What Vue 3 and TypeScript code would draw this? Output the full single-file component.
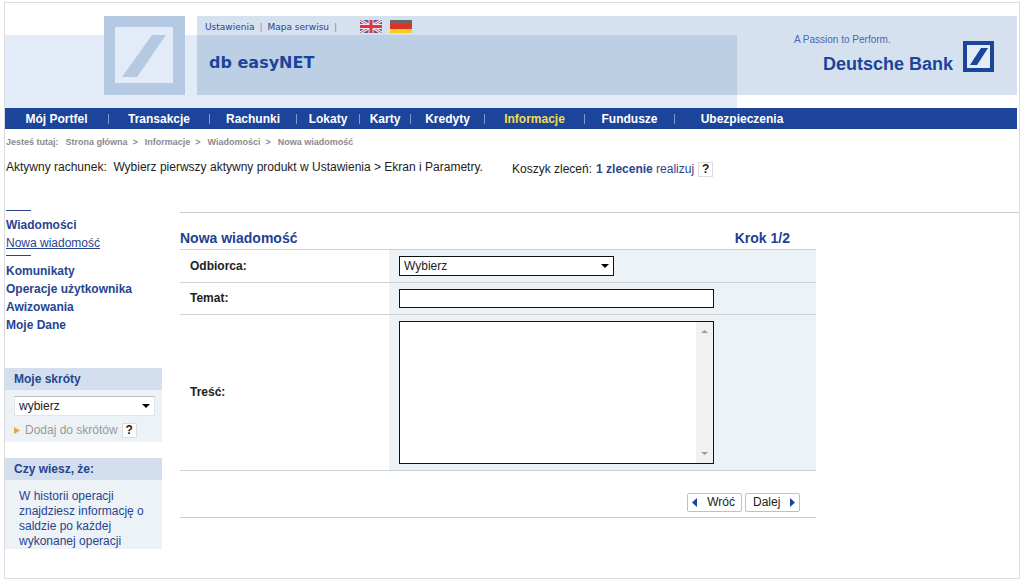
<script setup lang="ts">
import { ref } from 'vue'

interface NavItem {
  label: string
  active?: boolean
}

const navItems: NavItem[] = [
  { label: 'Mój Portfel' },
  { label: 'Transakcje' },
  { label: 'Rachunki' },
  { label: 'Lokaty' },
  { label: 'Karty' },
  { label: 'Kredyty' },
  { label: 'Informacje', active: true },
  { label: 'Fundusze' },
  { label: 'Ubezpieczenia' },
]

const crumbs: string[] = ['Strona główna', 'Informacje', 'Wiadomości', 'Nowa wiadomość']
const sections: string[] = ['Komunikaty', 'Operacje użytkownika', 'Awizowania', 'Moje Dane']

const recipient = ref('Wybierz')
const subject = ref('')
const body = ref('')
const shortcut = ref('wybierz')
</script>

<template>
  <div class="frame">
    <header class="header">
      <div class="band"></div>
      <div class="panel"></div>
      <div class="panel-dark"></div>
      <div class="emblem">
        <svg width="81" height="79" viewBox="0 0 81 79" aria-hidden="true">
          <rect width="81" height="79" fill="#b5c9e2" />
          <rect x="11" y="11" width="58" height="56" fill="#e2ebf7" />
          <path d="M48 19H62L33 61H18Z" fill="#b5c9e2" />
        </svg>
      </div>
      <div class="tools">
        <a href="#">Ustawienia</a><span class="bar">|</span>
        <a href="#">Mapa serwisu</a><span class="bar">|</span>
        <a href="#" class="flag flag-en" aria-label="English">
          <svg width="22" height="13" viewBox="0 0 22 13">
            <rect width="22" height="13" fill="#5a5f9c" />
            <path d="M0 0L22 13M22 0L0 13" stroke="#f1eef5" stroke-width="3" />
            <path d="M0 0L22 13M22 0L0 13" stroke="#d9566a" stroke-width="1" />
            <path d="M11 0V13M0 6.5H22" stroke="#f3e4ea" stroke-width="5" />
            <path d="M11 0V13M0 6.5H22" stroke="#dc3545" stroke-width="3" />
          </svg>
        </a>
        <a href="#" class="flag" aria-label="Deutsch">
          <svg width="22" height="13" viewBox="0 0 22 13">
            <rect width="22" height="5" fill="#6b6767" />
            <rect y="4" width="22" height="5" fill="#dd3128" />
            <rect y="9" width="22" height="4" fill="#f8cf1c" />
          </svg>
        </a>
      </div>
      <div class="product">db easyNET</div>
      <div class="brand">
        <div class="brand-text">
          <span class="claim">A Passion to Perform.</span>
          <span class="bank">Deutsche Bank</span>
        </div>
        <svg width="31" height="31" viewBox="0 0 31 31" aria-hidden="true">
          <rect x="2" y="2" width="27" height="27" fill="#e3ebf6" stroke="#1c449b" stroke-width="4" />
          <path d="M18 7H25L14 24H7Z" fill="#1c449b" />
        </svg>
      </div>
    </header>

    <nav class="nav">
      <ul>
        <li v-for="item in navItems" :key="item.label">
          <a href="#" :class="{ active: item.active }">{{ item.label }}</a>
        </li>
      </ul>
    </nav>

    <div class="crumbs">
      <span>Jesteś tutaj:</span>
      <template v-for="(crumb, i) in crumbs" :key="crumb">
        <span v-if="i > 0" class="gt">&gt;</span>
        <a href="#">{{ crumb }}</a>
      </template>
    </div>

    <div class="status">
      <p class="account">Aktywny rachunek:&nbsp; Wybierz pierwszy aktywny produkt w Ustawienia &gt; Ekran i Parametry.</p>
      <p class="basket">
        Koszyk zleceń: <a href="#"><b>1 zlecenie</b> realizuj</a>
        <button type="button" class="help">?</button>
      </p>
    </div>

    <div class="columns">
      <aside class="side">
        <ul class="menu">
          <li class="group">
            <a href="#" class="main-link">Wiadomości</a>
            <a href="#" class="sub-link">Nowa wiadomość</a>
          </li>
          <li v-for="section in sections" :key="section">
            <a href="#" class="main-link">{{ section }}</a>
          </li>
        </ul>

        <section class="box">
          <h2><label for="shortcut">Moje skróty</label></h2>
          <div class="box-body">
            <div class="select select-light">
              <select id="shortcut" v-model="shortcut">
                <option>wybierz</option>
              </select>
              <svg width="8" height="4" viewBox="0 0 8 4" aria-hidden="true"><path d="M0 0H8L4 4Z" fill="#000" /></svg>
            </div>
            <div class="add">
              <svg width="6" height="7" viewBox="0 0 6 7" aria-hidden="true"><path d="M0 0L6 3.5L0 7Z" fill="#e2a93b" /></svg>
              <a href="#">Dodaj do skrótów</a>
              <button type="button" class="help">?</button>
            </div>
          </div>
        </section>

        <section class="box">
          <h2>Czy wiesz, że:</h2>
          <p class="tip">W historii operacji znajdziesz informację o saldzie po każdej wykonanej operacji</p>
        </section>
      </aside>

      <main class="main">
        <form class="form" @submit.prevent>
          <div class="form-head">
            <h1>Nowa wiadomość</h1>
            <span class="step">Krok 1/2</span>
          </div>
          <div class="row">
            <label for="recipient">Odbiorca:</label>
            <div class="field">
              <div class="select select-dark">
                <select id="recipient" v-model="recipient">
                  <option>Wybierz</option>
                </select>
                <svg width="8" height="4" viewBox="0 0 8 4" aria-hidden="true"><path d="M0 0H8L4 4Z" fill="#000" /></svg>
              </div>
            </div>
          </div>
          <div class="row">
            <label for="subject">Temat:</label>
            <div class="field">
              <input id="subject" v-model="subject" type="text" />
            </div>
          </div>
          <div class="row">
            <label for="body">Treść:</label>
            <div class="field">
              <div class="area">
                <textarea id="body" v-model="body"></textarea>
                <div class="track" aria-hidden="true">
                  <svg width="7" height="3" viewBox="0 0 7 3"><path d="M0 3L3.5 0L7 3Z" fill="#9a9a9a" /></svg>
                  <svg width="7" height="3" viewBox="0 0 7 3"><path d="M0 0H7L3.5 3Z" fill="#9a9a9a" /></svg>
                </div>
              </div>
            </div>
          </div>
          <div class="actions">
            <button type="button">
              <svg width="5" height="9" viewBox="0 0 5 9" aria-hidden="true"><path d="M5 0V9L0 4.5Z" fill="#1c449b" /></svg>
              Wróć
            </button>
            <button type="submit">
              Dalej
              <svg width="5" height="9" viewBox="0 0 5 9" aria-hidden="true"><path d="M0 0V9L5 4.5Z" fill="#1c449b" /></svg>
            </button>
          </div>
        </form>
      </main>
    </div>
  </div>
</template>

<style>
body {
  margin: 0;
  background: #fff;
}
</style>

<style scoped>
.frame {
  box-sizing: border-box;
  margin: 2px 4px 4px;
  padding: 13px 0 29px;
  border: 1px solid #d9dbe0;
  font: 12px/15px "Liberation Sans", Arial, sans-serif;
  color: #222;
}

a {
  color: #27448f;
  text-decoration: none;
}

ul,
p,
h1,
h2 {
  margin: 0;
  padding: 0;
  list-style: none;
}

button,
input,
select,
textarea {
  box-sizing: border-box;
  margin: 0;
  font: inherit;
  color: #222;
}

svg {
  display: block;
  flex: none;
}

/* Header: overlapping bands share one grid */
.header {
  display: grid;
  grid-template-columns: 99px 81px 12px minmax(0, 540px) minmax(280px, 1fr);
  grid-template-rows: 19px 60px 13px;
  margin-right: 2px;
}

.band {
  grid-area: 2 / 1 / 4 / 5;
  background: #e2ebf7;
}

.panel {
  grid-area: 1 / 4 / 3 / 6;
  background: #d6e1ef;
}

.panel-dark {
  grid-area: 2 / 4 / 3 / 5;
  background: #bdcfe5;
}

.emblem {
  grid-area: 1 / 2 / 3 / 3;
}

.tools {
  grid-area: 1 / 4 / 2 / 5;
  display: flex;
  align-items: center;
  padding: 2px 0 0 8px;
  font: 9px/12px "DejaVu Sans", Verdana, sans-serif;
}

.tools .bar {
  margin: 0 5px;
  color: #7f8ca3;
}

.flag {
  margin-left: 8px;
}

.flag-en {
  margin-left: 18px;
}

.product {
  grid-area: 2 / 4 / 3 / 5;
  padding: 18px 0 0 12px;
  font: bold 16px/20px "DejaVu Sans", Verdana, sans-serif;
  color: #1c449b;
}

.brand {
  grid-area: 1 / 5 / 3 / 6;
  display: flex;
  justify-content: flex-end;
  align-items: flex-start;
  gap: 10px;
  padding: 25px 23px 0 0;
}

.brand-text {
  display: flex;
  flex-direction: column;
  gap: 7px;
  margin-top: -7px;
}

.claim {
  font-size: 10px;
  line-height: 12px;
  color: #4a68ad;
}

.bank {
  padding-left: 29px;
  font-size: 18px;
  line-height: 22px;
  font-weight: bold;
  color: #1c449b;
}

.nav {
  margin-right: 2px;
  background: #1c449b;
}

.nav ul {
  display: grid;
  grid-template-columns: 104fr 101fr 87fr 63fr 51fr 74fr 100fr 90fr 134fr 208fr;
  align-items: center;
  height: 21px;
}

.nav li {
  border-right: 1px solid #7f9bd0;
  text-align: center;
  font-weight: bold;
  line-height: 10px;
  white-space: nowrap;
}

.nav li:last-child {
  border-right: 0;
}

.nav a {
  color: #fff;
}

.nav a.active {
  color: #f2dc50;
}

.crumbs {
  display: flex;
  padding: 7px 1px 0;
  font-size: 9px;
  line-height: 12px;
  font-weight: bold;
  color: #8a8a8e;
}

.crumbs a {
  margin-left: 7px;
  color: inherit;
}

.crumbs .gt {
  margin-left: 5px;
}

.status {
  display: grid;
  grid-template-columns: 506px 1fr;
  padding: 12px 1px 0;
}

.basket {
  display: flex;
  align-items: center;
  gap: 4px;
  padding-top: 2px;
}

.help {
  width: 15px;
  height: 15px;
  padding: 0;
  border: 1px solid #dcdcdc;
  background: #fff;
  font-weight: bold;
  line-height: 13px;
  text-align: center;
}

.columns {
  display: grid;
  grid-template-columns: 157px minmax(0, 1fr);
  gap: 18px;
  margin-top: 33px;
}

.menu {
  padding-left: 1px;
  line-height: 18px;
}

.main-link {
  display: block;
  font-weight: bold;
}

.group {
  margin-bottom: 6px;
}

.group::before,
.group::after {
  content: "";
  display: block;
  width: 25px;
  height: 1px;
  background: #27448f;
}

.group::before {
  margin-bottom: 5px;
}

.group::after {
  margin-top: 3px;
}

.sub-link {
  text-decoration: underline;
}

.box {
  margin-top: 16px;
  background: #ecf2f6;
}

.menu + .box {
  margin-top: 34px;
}

.box h2 {
  padding: 0 9px;
  background: #d3dfee;
  font-size: 12px;
  line-height: 22px;
  color: #27448f;
}

.box-body {
  padding: 6px 7px 4px 9px;
}

.select {
  position: relative;
}

.select select {
  display: block;
  width: 100%;
  height: 20px;
  appearance: none;
  border-radius: 0;
  background: #fff;
}

.select svg {
  position: absolute;
  right: 5px;
  top: 8px;
}

.select-light select {
  padding: 0 4px;
  border: 1px solid #e2e5e8;
  border-top-color: #b9bcc0;
}

.select-dark {
  width: 215px;
}

.select-dark select {
  padding: 0 4px;
  border: 1px solid #111;
}

.add {
  display: flex;
  align-items: center;
  gap: 4px;
  margin-top: 7px;
}

.add a {
  margin-left: 1px;
  color: #999;
}

.tip {
  padding: 9px 14px 0;
  color: #27448f;
}

.main {
  margin-top: 2px;
  border-top: 1px solid #c9cbce;
}

.form {
  max-width: 636px;
  border-bottom: 1px solid #c9cbce;
}

.form-head {
  display: flex;
  justify-content: space-between;
  padding: 17px 26px 2px 0;
  color: #1f3f93;
  font-size: 14px;
  line-height: 17px;
  font-weight: bold;
}

.form-head h1 {
  font-size: 14px;
}

.row {
  display: grid;
  grid-template-columns: 209px 1fr;
  border-top: 1px solid #cdd2d6;
}

.row > label {
  align-self: center;
  padding-left: 10px;
  font-weight: bold;
}

.field {
  padding: 6px 10px;
  background: #ecf2f6;
}

.field input {
  display: block;
  width: 315px;
  height: 19px;
  padding: 0 4px;
  border: 1px solid #111;
}

.area {
  display: flex;
  box-sizing: border-box;
  width: 315px;
  height: 143px;
  border: 1px solid #111;
  background: #fff;
}

.area textarea {
  flex: 1;
  min-width: 0;
  padding: 4px;
  border: 0;
  resize: none;
  background: transparent;
}

.track {
  display: flex;
  flex-direction: column;
  justify-content: space-between;
  align-items: center;
  width: 17px;
  padding: 8px 0;
  box-sizing: border-box;
  background: #f1f1f1;
}

.actions {
  display: flex;
  justify-content: flex-end;
  gap: 3px;
  padding: 22px 16px 5px 0;
  border-top: 1px solid #cdd2d6;
}

.actions button {
  display: flex;
  align-items: center;
  justify-content: space-between;
  width: 55px;
  height: 19px;
  padding: 0 6px 0 4px;
  border: 1px solid #bfc1c5;
  border-radius: 2px;
  background: #fff;
}

.actions button:last-child {
  padding: 0 4px 0 7px;
}
</style>
